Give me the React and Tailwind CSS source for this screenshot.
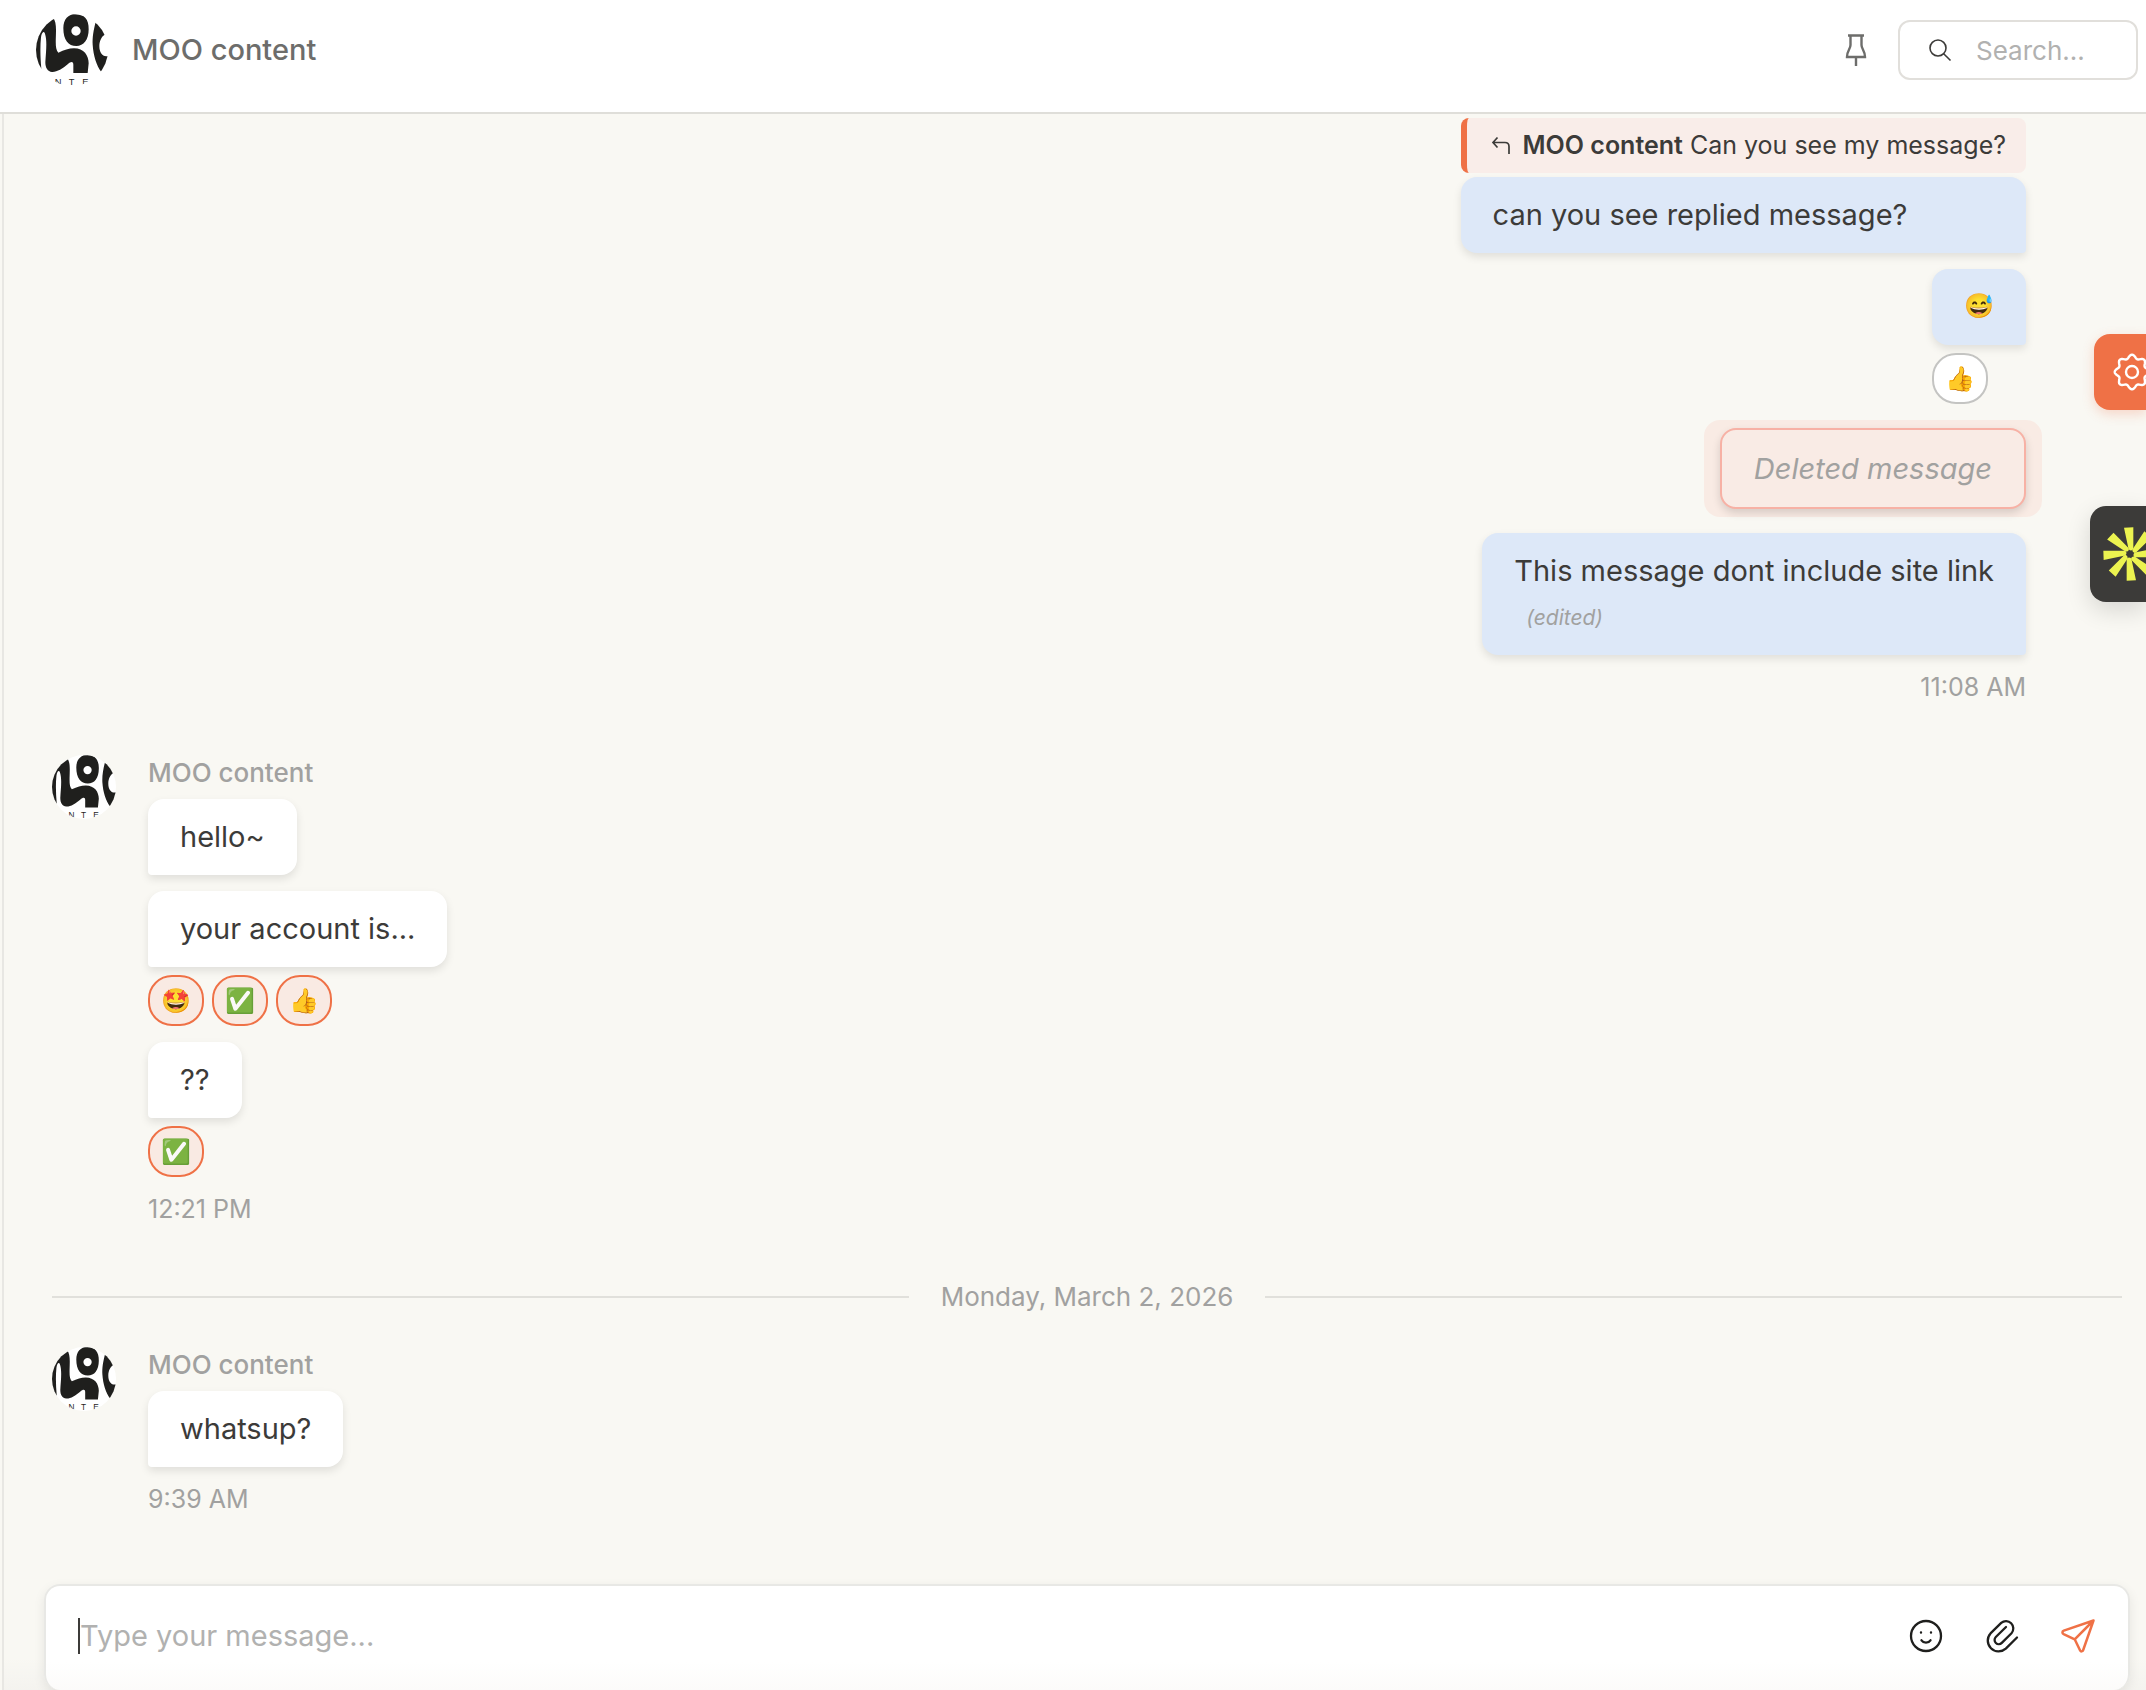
import React, { useId, useState } from "react";

const burstAngles = [0, 45, 90, 135, 180, 225, 270, 315];

// scalloped outline with eight rounded teeth
const gearPoints = Array.from({ length: 96 }, (_, i) => {
  const a = (i / 96) * Math.PI * 2;
  const r = 15.5 + 1.8 * Math.cos(a * 8);
  return `${(20 + r * Math.sin(a)).toFixed(2)},${(20 - r * Math.cos(a)).toFixed(2)}`;
}).join(" ");

function Logo({ className }) {
  const id = useId();
  return (
    <svg viewBox="0 0 216 216" className={className} role="img" aria-label="MOO content">
      <clipPath id={id}>
        <circle cx="108" cy="108" r="108" />
      </clipPath>
      <g clipPath={`url(#${id})`} fill="#1f1f1d">
        <rect width="216" height="216" fill="#fff" />
        <path d="M51 10C58 20 60 32 60 48C60 82 56 104 67 116C85 108 98 103 114 103C144 103 158 125 158 148L155 177H112V152C112 142 105 142 95 151C80 164 62 175 48 174C35 173 28 162 28 145C30 110 34 82 27 59C23 49 17 56 15 70C12 100 13 130 16 164H-5V0H46Z" />
        <path d="M82 42C82 16 96 0 120 0C144 0 159 16 158 46C158 78 143 96 121 96C97 96 82 78 82 42ZM120 37A14 14 0 1 0 120 65A14 14 0 1 0 120 37Z" fillRule="evenodd" />
        <path d="M180 20C172 50 169 70 170 92C172 125 182 155 196 174H216V126C200 130 190 116 190 96C190 80 198 66 206 62L216 56V20Z" />
        <text x="56 98 139" y="214" fontSize="28" className="font-['Liberation_Sans',sans-serif]">
          NTE
        </text>
      </g>
    </svg>
  );
}

function PinIcon() {
  return (
    <svg viewBox="0 0 24 34" className="h-[34px] w-6" fill="none" stroke="currentColor" strokeWidth="2.400">
      <path d="M4 2.500H20M6.500 2.500V12C6.500 16 3 17.500 3 24H21C21 17.500 17.500 16 17.500 12V2.500M12 24V33" />
    </svg>
  );
}

function SearchIcon() {
  return (
    <svg viewBox="0 0 24 24" className="size-6 shrink-0" fill="none" stroke="#3c3b39" strokeWidth="1.600">
      <circle cx="10" cy="10" r="8" />
      <path d="M15.700 15.700L22.500 22.500" />
    </svg>
  );
}

function ReplyIcon() {
  return (
    <svg viewBox="0 0 20 20" className="size-5 shrink-0" fill="none" stroke="currentColor" strokeWidth="1.700">
      <path d="M6.500 1.500L2 6.500L6.500 11.500M2 6.500H14C16.500 6.500 18 8 18 10.500V18" />
    </svg>
  );
}

function SmileIcon() {
  return (
    <svg viewBox="0 0 36 36" className="size-9" fill="none" stroke="#1f1f1d" strokeWidth="2.300" strokeLinecap="round">
      <circle cx="18" cy="18" r="15" />
      <path d="M13.500 22.300C15.500 25.300 20.500 25.300 22.500 22.300" />
      <path d="M13 14.500V14.600M23 14.500V14.600" strokeWidth="2.400" />
    </svg>
  );
}

function ClipIcon() {
  return (
    <svg viewBox="0 0 36 36" className="size-9" fill="none" stroke="#1f1f1d" strokeWidth="2.300" strokeLinecap="round" strokeLinejoin="round">
      <path d="M33 19.500L21.800 30.600A10.800 10.800 0 0 1 6.500 15.400L17.200 4.900A7.300 7.300 0 0 1 27.500 15.200L17.800 24.900A4.200 4.200 0 0 1 11.800 19L22 9" />
    </svg>
  );
}

function SendIcon() {
  return (
    <svg viewBox="0 0 36 36" className="size-9" fill="none" stroke="#ef7146" strokeWidth="2.500" strokeLinecap="round" strokeLinejoin="round">
      <path d="M33.500 2.500L3.800 12.600C2 13.300 2 15.300 3.600 16.100L14.700 21.300L20 32.200C20.800 33.900 22.600 33.700 23.200 32ZM14.700 21.300L33.500 2.500" />
    </svg>
  );
}

function Bubble({ own, children }) {
  return (
    <div
      className={[
        "min-h-[76px] rounded-2xl px-8 py-4 text-[29px] leading-[43px] text-[#3c3b39] shadow-[0_4px_8px_rgba(0,0,0,0.1)]",
        own ? "rounded-br bg-[#dde8f8]" : "rounded-bl bg-white",
      ].join(" ")}
    >
      {children}
    </div>
  );
}

function Reaction({ emoji, active }) {
  return (
    <button
      type="button"
      className={[
        "flex h-[51px] w-14 items-center justify-center rounded-3xl border-2 text-2xl leading-none",
        active ? "border-[#ef7146] bg-[#f9eae3]" : "border-[#c4c4c2] bg-white",
      ].join(" ")}
    >
      {emoji}
    </button>
  );
}

function Incoming({ time, children }) {
  return (
    <div className="flex items-start gap-8">
      <Logo className="size-16 shrink-0" />
      <div className="flex flex-col items-start">
        <p className="mb-2 text-[26px] leading-9 font-medium text-[#a1a1a0]">MOO content</p>
        {children}
        <time className="mt-3 text-[25px] leading-10 text-[#a1a1a0]">{time}</time>
      </div>
    </div>
  );
}

export default function App() {
  const [message, setMessage] = useState("");
  const [query, setQuery] = useState("");

  return (
    <div className="relative flex h-screen flex-col overflow-hidden bg-[#f9f8f3] font-['Inter','Liberation_Sans',sans-serif] text-[#3c3b39]">
      <header className="flex shrink-0 items-start justify-between border-b-2 border-[#dfded9] bg-white pt-[14px] pr-2 pb-[26px] pl-9">
        <div className="flex items-center gap-6">
          <Logo className="size-[72px]" />
          <h1 className="text-[29px] font-medium text-[#6d6d6b]">MOO content</h1>
        </div>
        <div className="flex h-[72px] items-center gap-[26px]">
          <button type="button" aria-label="Pinned messages" className="px-1 text-[#6d6d6b]">
            <PinIcon />
          </button>
          <label className="flex h-[60px] w-60 items-center gap-6 rounded-xl border-2 border-[#e1dfdb] bg-white px-7">
            <SearchIcon />
            <input
              type="search"
              aria-label="Search"
              value={query}
              onChange={(e) => setQuery(e.target.value)}
              placeholder="Search..."
              className="w-full min-w-0 text-[26px] outline-none placeholder:text-[#b1b1b0]"
            />
          </label>
        </div>
      </header>

      <div className="ml-0.5 flex min-h-0 flex-1 flex-col border-l-2 border-[#e8e7e3] bg-[linear-gradient(to_top,#f4f3ef,#f9f8f3_32px)]">
        <main className="min-h-0 flex-1 overflow-hidden pt-1 pr-6 pl-12">
          <section className="mr-24 flex flex-col items-end">
            <div className="flex flex-col">
              <div className="mb-1 flex h-[55px] items-center rounded-lg border-l-[6px] border-[#ef7146] bg-[#f9ede9] pr-5 pl-6 text-[25px]">
                <ReplyIcon />
                <p className="ml-3">
                  <b className="font-semibold">MOO content</b> Can you see my message?
                </p>
              </div>
              <Bubble own>can you see replied message?</Bubble>
            </div>
            <div className="mt-4 flex flex-col items-start gap-2">
              <Bubble own>
                <span className="block text-2xl leading-[42px]">😅</span>
              </Bubble>
              <Reaction emoji="👍" />
            </div>
            <div className="mt-4 -mr-4 rounded-2xl bg-[#f9ebe4] px-4 py-2">
              <div className="rounded-2xl border-2 border-[#f7b1a5] bg-[#f9ebe5] px-8 py-[18px] text-[29px] leading-[41px] text-[#a1a1a0] italic shadow-[0_4px_8px_rgba(0,0,0,0.14)]">
                Deleted message
              </div>
            </div>
            <div className="mt-4">
              <Bubble own>
                <p>This message dont include site link</p>
                <p className="ml-3 pt-1 text-[21px] text-[#a1a1a0] italic">(edited)</p>
              </Bubble>
            </div>
            <time className="mt-3 text-[25px] leading-10 text-[#a1a1a0]">11:08 AM</time>
          </section>

          <section className="mt-12">
            <Incoming time="12:21 PM">
              <Bubble>hello~</Bubble>
              <div className="mt-4">
                <Bubble>your account is...</Bubble>
              </div>
              <div className="mt-2 flex gap-2">
                <Reaction emoji="🤩" active />
                <Reaction emoji="✅" active />
                <Reaction emoji="👍" active />
              </div>
              <div className="mt-4">
                <Bubble>??</Bubble>
              </div>
              <div className="mt-2">
                <Reaction emoji="✅" active />
              </div>
            </Incoming>
          </section>

          <div className="mt-[50px] mb-8 flex items-center gap-8">
            <div className="h-0.5 flex-1 bg-[#e1e0db]" />
            <p className="text-[26px] leading-9 text-[#a1a1a0]">Monday, March 2, 2026</p>
            <div className="h-0.5 flex-1 bg-[#e1e0db]" />
          </div>

          <Incoming time="9:39 AM">
            <Bubble>whatsup?</Bubble>
          </Incoming>
        </main>

        <form
          onSubmit={(e) => e.preventDefault()}
          className="mr-4 ml-10 flex h-[106px] shrink-0 items-center rounded-2xl border-2 border-b-0 border-[#e8e8e5] bg-[linear-gradient(to_top,#fcfbfa,#fff_28px)] pr-8 pb-1 pl-8 shadow-[0_4px_12px_rgba(0,0,0,0.08)]"
        >
          <span className="h-9 w-0.5 bg-[#3c3b39]" />
          <input
            type="text"
            aria-label="Message"
            value={message}
            onChange={(e) => setMessage(e.target.value)}
            placeholder="Type your message..."
            className="min-w-0 flex-1 text-[29px] outline-none placeholder:text-[#b1b1b0]"
          />
          <div className="flex gap-10">
            <button type="button" aria-label="Emoji">
              <SmileIcon />
            </button>
            <button type="button" aria-label="Attach file">
              <ClipIcon />
            </button>
            <button type="submit" aria-label="Send">
              <SendIcon />
            </button>
          </div>
        </form>
      </div>

      <div className="absolute top-[334px] right-0 flex flex-col items-end gap-24">
        <button
          type="button"
          aria-label="Settings"
          className="flex h-[76px] w-[52px] items-center overflow-hidden rounded-l-2xl bg-[#ef7146] pl-[18px] shadow-[0_4px_12px_rgba(239,113,70,0.25)]"
        >
          <svg viewBox="0 0 40 40" className="size-10 shrink-0" fill="none" stroke="#fff" strokeWidth="2.400" strokeLinejoin="round">
            <polygon points={gearPoints} />
            <circle cx="20" cy="20" r="6" />
          </svg>
        </button>
        <button
          type="button"
          aria-label="Assistant"
          className="flex h-24 w-14 items-center overflow-hidden rounded-l-2xl bg-[#3c3b39] pl-3 shadow-[0_8px_24px_rgba(0,0,0,0.14)]"
        >
          <svg viewBox="-84 -84 168 168" className="size-14 shrink-0" fill="#ecf350">
            {burstAngles.map((a) => (
              <path key={a} d="M10 -80L-18 -79L-5 -18C-4 -8 10 -8 10 -18Z" transform={`rotate(${a})`} />
            ))}
          </svg>
        </button>
      </div>
    </div>
  );
}
